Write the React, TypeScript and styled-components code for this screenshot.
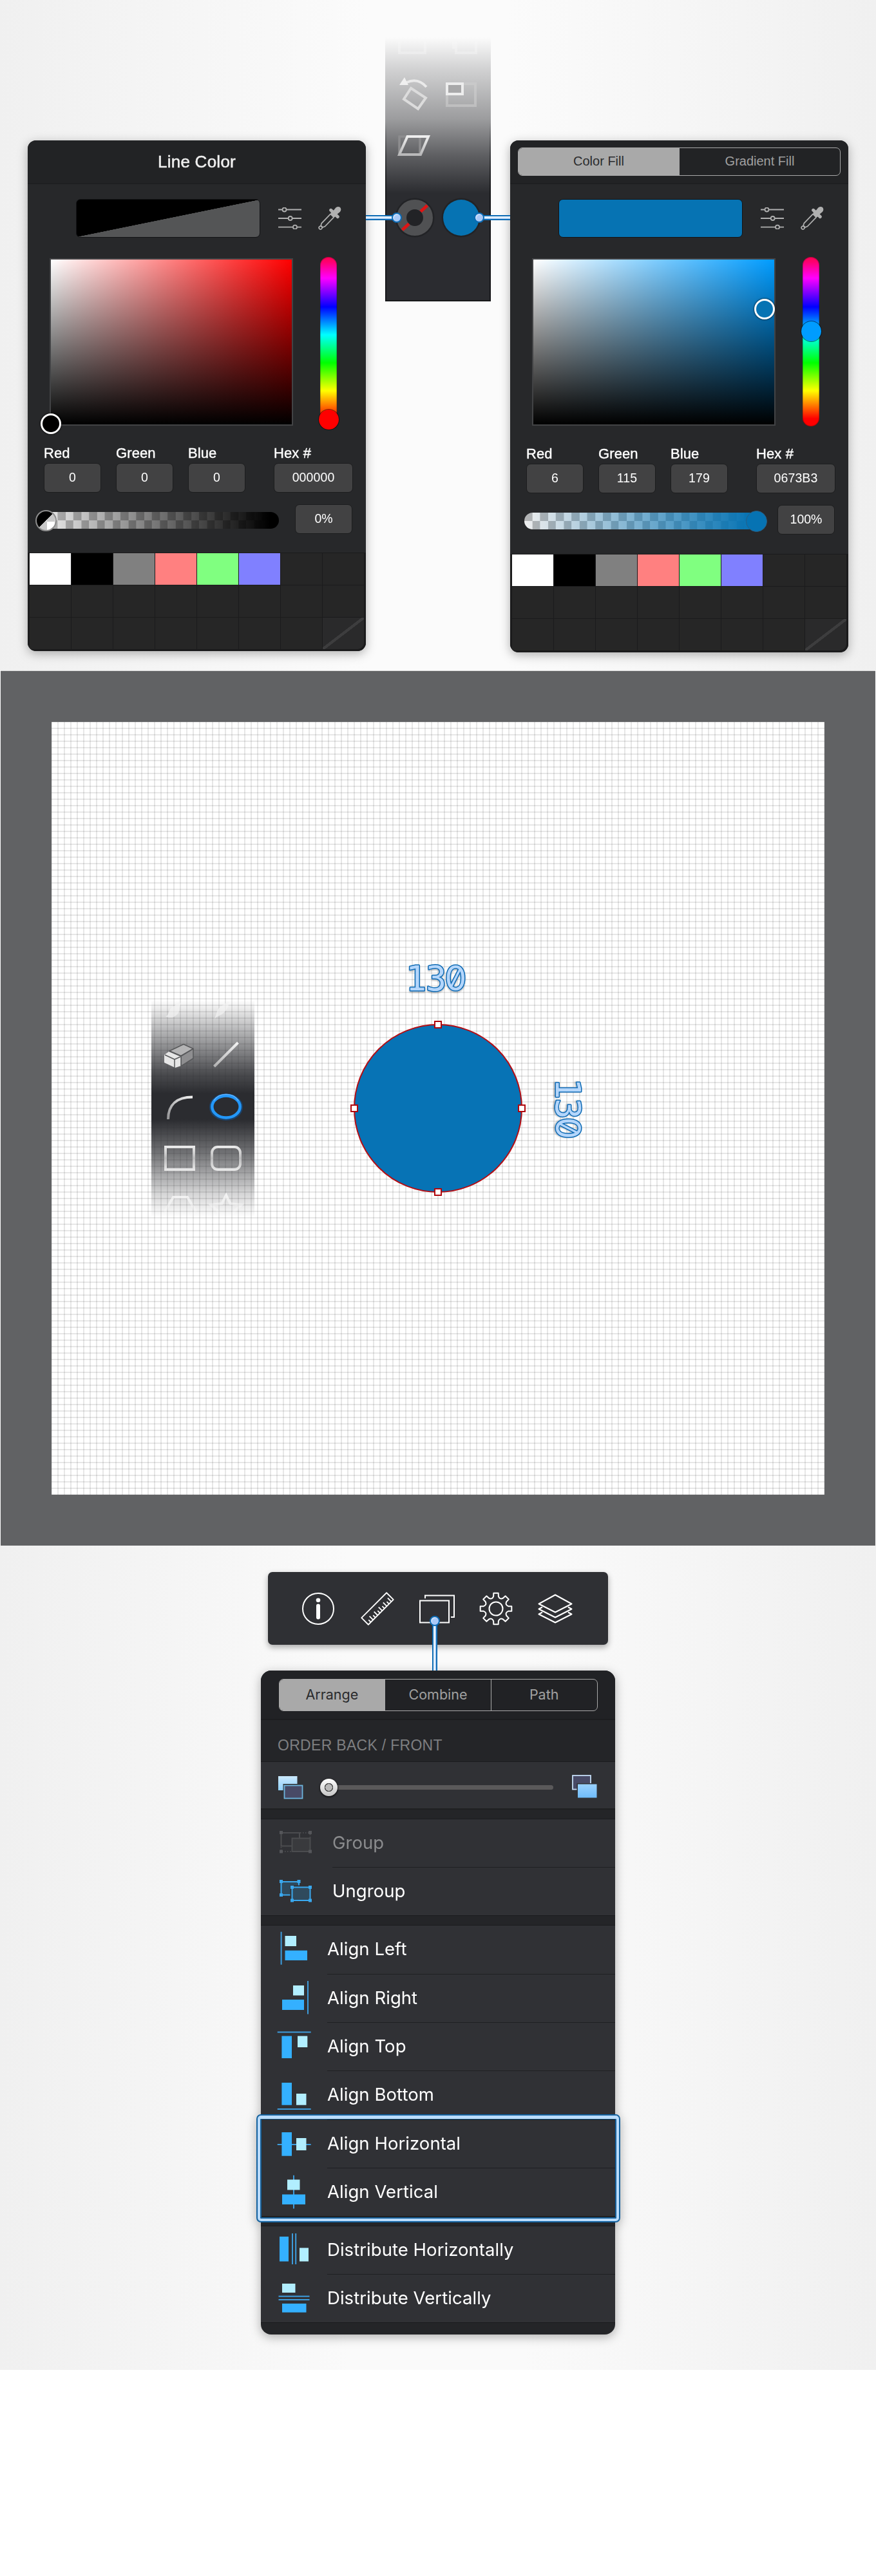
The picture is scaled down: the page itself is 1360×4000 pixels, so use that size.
import React from "react";
import styled, { createGlobalStyle, css } from "styled-components";

const helvetica = `"Liberation Sans", Arial, sans-serif`;
const sanFrancisco = `Inter, "Liberation Sans", sans-serif`;

const GlobalStyle = createGlobalStyle`
  *, *::before, *::after { box-sizing: border-box; }
  body { margin: 0; background: #fff; font-family: ${helvetica}; }
  svg { display: block; flex: none; }
`;

const Page = styled.main`
  width: 1360px;
  height: 4000px;
  overflow: hidden;
  background: #fff;
`;

const Backdrop = styled.section`
  position: relative;
  background: linear-gradient(90deg, #f0f0f0, #fbfbfb 42%, #fbfbfb 58%, #f0f0f0);
`;

const ColorSection = styled(Backdrop)`
  height: 1041px;
  display: flex;
  align-items: flex-start;
  padding: 0 43px;
`;

/* ---------- Color panels ---------- */

const Panel = styled.div`
  margin-top: 218px;
  width: 525px;
  flex: none;
  border-radius: 13px;
  overflow: hidden;
  background: #27282a;
`;

const PanelShadow = styled.div<{ $left?: number }>`
  margin-left: ${(p) => p.$left ?? 0}px;
  flex: none;
  filter: drop-shadow(0 4px 8px rgba(0, 0, 0, 0.3));
`;

const PanelHeader = styled.header`
  height: 68px;
  border-bottom: 2px solid #1e1f21;
  background: #222325;
  display: flex;
  align-items: flex-start;
  justify-content: center;
`;

const PanelTitle = styled.h2`
  margin: 18px 0 0;
  font: 400 26px/30px ${helvetica};
  color: #f0f0f0;
  letter-spacing: 0.25px;
  -webkit-text-stroke: 0.5px #f0f0f0;
`;

const Segments = styled.div<{ $w: number; $h: number; $top: number }>`
  margin-top: ${(p) => p.$top}px;
  width: ${(p) => p.$w}px;
  height: ${(p) => p.$h}px;
  display: flex;
  border: 1.5px solid #a9a9a9;
  border-radius: 7px;
  overflow: hidden;
`;

const Segment = styled.button<{ $active?: boolean; $font: string; $size: number }>`
  flex: 1;
  border: 0;
  padding: 0 0 2px;
  font-family: ${(p) => p.$font};
  font-size: ${(p) => p.$size}px;
  color: ${(p) => (p.$active ? "#2a2b2d" : "#a0a0a0")};
  background: ${(p) => (p.$active ? "#a9a9a9" : "transparent")};
  & + & { border-left: 1.5px solid #a9a9a9; }
`;

const SwatchRow = styled.div`
  display: flex;
  align-items: center;
  height: 60px;
  margin: 23px 0 0 75px;
`;

const CurrentSwatch = styled.div<{ $color?: string }>`
  width: 286px;
  height: 60px;
  border: 1.5px solid #131416;
  border-radius: 7px;
  margin-right: 27px;
  background: ${(p) => p.$color ?? "linear-gradient(to bottom right, #000 49.8%, #545556 50.2%)"};
`;

const PickerRow = styled.div`
  display: flex;
  margin: 30px 0 0 34px;
  height: 263px;
`;

const Field = styled.div<{ $hue: string }>`
  position: relative;
  margin: 2px 42px 0 0;
  width: 378px;
  height: 260px;
  border: 2.5px solid #424345;
  background: linear-gradient(to top, #000, transparent), linear-gradient(to right, #fff, ${(p) => p.$hue});
`;

const FieldHandle = styled.i<{ $x: number; $y: number; $color: string }>`
  position: absolute;
  left: ${(p) => p.$x - 16}px;
  top: ${(p) => p.$y - 16}px;
  width: 32px;
  height: 32px;
  border-radius: 50%;
  border: 3px solid #fff;
  background: ${(p) => p.$color};
  box-shadow: 0 0 2px 1px rgba(0, 0, 0, 0.45);
`;

const HueBar = styled.div`
  position: relative;
  width: 26px;
  height: 263px;
  border-radius: 13px;
  background: linear-gradient(#ff0050, #ff0070 3%, #f0f 12.5%, #00f 29.5%, #0ff 46%, #0f0 62.5%, #ff0 79%, #f00 95.5%);
  box-shadow: inset 0 0 1px 1px rgba(0, 0, 0, 0.25);
`;

const HueKnob = styled.i<{ $y: number; $color: string }>`
  position: absolute;
  left: -3.5px;
  top: ${(p) => p.$y - 16.5}px;
  width: 33px;
  height: 33px;
  border-radius: 50%;
  border: 1.5px solid rgba(0, 0, 0, 0.5);
  background: ${(p) => p.$color};
  background-clip: padding-box;
`;

const Inputs = styled.div<{ $gap: number }>`
  display: flex;
  gap: 23px;
  margin: ${(p) => p.$gap}px 0 0 25px;
`;

const InputGroup = styled.label<{ $push?: boolean }>`
  display: flex;
  flex-direction: column;
  margin-left: ${(p) => (p.$push ? 21 : 0)}px;
  font: 400 22px/24px ${helvetica};
  letter-spacing: 0.1px;
  color: #fff;
  -webkit-text-stroke: 0.4px #fff;
`;

const ValueBox = styled.div<{ $w?: number }>`
  width: ${(p) => p.$w ?? 89}px;
  height: 46px;
  margin-top: 3px;
  border: 1px solid #1c1d1e;
  border-radius: 7px;
  background: #424243;
  color: #fff;
  font: 400 19.5px/43px ${helvetica};
  text-align: center;
  -webkit-text-stroke: 0;
`;

const OpacityRow = styled.div<{ $bottom: number }>`
  display: flex;
  align-items: center;
  margin: 15px 0 ${(p) => p.$bottom}px 22px;
`;

const OpacityTrack = styled.div<{ $color: string }>`
  position: relative;
  width: 368px;
  height: 26px;
  margin: 7px 25px 0 0;
  border-radius: 13px;
  background:
    linear-gradient(to right, transparent, ${(p) => p.$color} 96%),
    conic-gradient(#eee 25%, #b4b4b4 0 50%, #eee 0 75%, #b4b4b4 0) 0 0 / 24.4px 26px;
`;

const OpacityKnob = styled.i<{ $x: number; $color: string; $clear?: boolean }>`
  position: absolute;
  left: ${(p) => p.$x - 16.5}px;
  top: -3.5px;
  width: 33px;
  height: 33px;
  border-radius: 50%;
  ${(p) =>
    p.$clear
      ? css`
          border: 2px solid #8d8d8d;
          background: linear-gradient(135deg, #000 50%, transparent 50%),
            conic-gradient(#c8c8c8 25%, #fff 0 50%, #c8c8c8 0 75%, #ddd 0) 4px 3px / 24px 26px;
        `
      : css`
          border: 1px solid #2a5f86;
          background: ${p.$color};
        `}
`;

const Palette = styled.div`
  display: grid;
  grid-template-columns: repeat(8, 64px);
  grid-auto-rows: 49px;
  gap: 1px;
  padding: 1px 3px 3px;
  background: #1b1b1c;
`;

const PaletteCell = styled.i<{ $color?: string }>`
  background: ${(p) => p.$color ?? "#262626"};
  &:last-child {
    border-bottom-right-radius: 10px;
    background: linear-gradient(to bottom right, #2a2a2b 47%, #3d3d3e 47.5% 52.5%, #2a2a2b 53%);
  }
`;

const paletteColors = ["#ffffff", "#000000", "#808080", "#ff8080", "#80ff80", "#8080ff"];

const SlidersIcon = () => (
  <svg width="38" height="34" viewBox="0 0 38 34" fill="#27282a" stroke="#b0b0b0" strokeWidth="1.8">
    <path d="M1 3.5h36M1 17h36M1 30.7h36" />
    <circle cx="10.5" cy="3.5" r="3" />
    <circle cx="19.7" cy="17" r="3" />
    <circle cx="27" cy="30.7" r="3" />
  </svg>
);

const Dropper = styled.svg`
  margin-left: 24px;
`;

const EyedropperIcon = () => (
  <Dropper width="38" height="38" viewBox="0 0 38 38" fill="none" stroke="#b0b0b0" strokeWidth="1.7">
    <g transform="translate(18.7 19) rotate(44)">
      <path
        d="M-4.6 -18.5a4.6 5 0 0 1 9.2 0l-.6 5.5h3.4a2.5 2.5 0 0 1 0 5H4.6L3.6 -5h-7.2l-1 -3h-2.8a2.5 2.5 0 0 1 0 -5h3.4z"
        fill="#b0b0b0"
        stroke="none"
      />
      <path d="M-3.6 -6V14l1.6 3.5h4L3.6 14V-6" />
      <circle cx="0" cy="20.3" r="2.4" />
    </g>
  </Dropper>
);

type ColorPanelProps = {
  left?: number;
  header: React.ReactNode;
  swatch?: string;
  hue: string;
  color: string;
  handle: [number, number];
  hueY: number;
  rgb: [string, string, string];
  hex: string;
  opacity: string;
  clear?: boolean;
  slack: number;
};

const ColorPanel = (p: ColorPanelProps) => (
  <PanelShadow $left={p.left}>
    <Panel>
      <PanelHeader>{p.header}</PanelHeader>
      <SwatchRow>
        <CurrentSwatch $color={p.swatch} />
        <SlidersIcon />
        <EyedropperIcon />
      </SwatchRow>
      <PickerRow>
        <Field $hue={p.hue}>
          <FieldHandle $x={p.handle[0]} $y={p.handle[1]} $color={p.color} />
        </Field>
        <HueBar>
          <HueKnob $y={p.hueY} $color={p.hue} />
        </HueBar>
      </PickerRow>
      <Inputs $gap={30 + p.slack}>
        {["Red", "Green", "Blue"].map((name, i) => (
          <InputGroup key={name}>
            {name}
            <ValueBox>{p.rgb[i]}</ValueBox>
          </InputGroup>
        ))}
        <InputGroup $push>
          Hex #<ValueBox $w={123}>{p.hex}</ValueBox>
        </InputGroup>
      </Inputs>
      <OpacityRow $bottom={29 + p.slack}>
        <OpacityTrack $color={p.color}>
          <OpacityKnob $x={p.clear ? 6.7 : 360.5} $color={p.color} $clear={p.clear} />
        </OpacityTrack>
        <ValueBox>{p.opacity}</ValueBox>
      </OpacityRow>
      <Palette>
        {Array.from({ length: 24 }, (_, i) => (
          <PaletteCell key={i} $color={paletteColors[i]} />
        ))}
      </Palette>
    </Panel>
  </PanelShadow>
);

/* ---------- Center tool strip ---------- */

const ToolStrip = styled.div`
  margin: 58px 0 0 30px;
  width: 164px;
  height: 410px;
  flex: none;
  border-radius: 0 0 3px 3px;
  background: linear-gradient(
    rgba(43, 44, 48, 0),
    rgba(43, 44, 48, 0.2) 12%,
    rgba(43, 44, 48, 0.46) 31%,
    rgba(43, 44, 48, 0.75) 44.5%,
    #2b2c30 59%
  );
`;

const Connector = styled.div<{ $x: number; $y: number; $len: number; $dir: "left" | "right" | "down" }>`
  position: absolute;
  z-index: 2;
  left: ${(p) => p.$x}px;
  top: ${(p) => p.$y}px;
  width: ${(p) => (p.$dir === "down" ? 8 : p.$len)}px;
  height: ${(p) => (p.$dir === "down" ? p.$len : 8)}px;
  background: ${(p) =>
    `linear-gradient(${p.$dir === "down" ? "to right" : "to bottom"}, #0b6ab4 2px, #f2f9ff 2px 4px, #bcd8f8 4px 6px, #0b6ab4 6px)`};
  &::after {
    content: "";
    position: absolute;
    width: 16px;
    height: 16px;
    border-radius: 50%;
    border: 2px solid #0b6ab4;
    background: radial-gradient(circle at 60% 60%, #a9c9f7 45%, #e8f3ff 80%);
    ${(p) =>
      p.$dir === "left" ? "right: -8px; top: -4px;" : p.$dir === "right" ? "left: -8px; top: -4px;" : "left: -4px; top: -8px;"}
  }
`;

const ToolStripArt = () => (
  <svg width="164" height="410" viewBox="598 58 164 410" fill="none" stroke="#e4e4e5" strokeWidth="4">
    <path d="M599 190V467H761V190" stroke="url(#edge)" strokeWidth="2" />
    <defs>
      <linearGradient id="edge" x1="0" y1="190" x2="0" y2="310" gradientUnits="userSpaceOnUse">
        <stop stopColor="#17181a" stopOpacity="0" />
        <stop offset="1" stopColor="#17181a" />
      </linearGradient>
      <linearGradient id="metal" x1="0" y1="0" x2="0" y2="1">
        <stop stopColor="#eeeeee" />
        <stop offset="1" stopColor="#b8b8b9" />
      </linearGradient>
    </defs>
    <g stroke="#f8f8f8" opacity=".4">
      <path d="M620 62v20h40V62" />
      <path d="M708 62v20h31V62M704 62v14" />
    </g>
    <path d="M631 128q18-8 31 7" stroke="#eaeaea" />
    <path d="M620 132l8-12 6 12z" fill="#f0f0f0" stroke="none" />
    <path d="M638 137l23 15-12 17-22-15z" stroke="#dcdcdc" />
    <path d="M694 130h44v34h-44z" stroke="#cfcfcf" opacity=".55" />
    <path d="M694 130h24v16h-24z" stroke="#ededed" fill="#a8a8a9" />
    <path d="M620 212h32v28h-32z" stroke="#8d8d8f" strokeWidth="3.5" />
    <path d="M632.500 212h32.500l-12 28h-33z" stroke="url(#metal)" />
    <circle cx="644" cy="338" r="30.500" fill="#222326" stroke="none" />
    <circle cx="644" cy="338" r="20.500" stroke="#505153" strokeWidth="15" />
    <path d="M653 328.500l10.500-9.500M635 347.500l-10.500 9.500" stroke="#de1414" strokeWidth="5" />
    <circle cx="716" cy="338" r="30.500" fill="#222326" stroke="none" />
    <circle cx="716" cy="338" r="28" fill="#0673b3" stroke="none" />
  </svg>
);

/* ---------- Canvas ---------- */

const CanvasFrame = styled.section`
  height: 1359px;
  padding: 79px 79px 80px;
  margin: 0 1px;
  border-top: 1px solid #dcdcdc;
  background: #616264;
`;

const Paper = styled.div`
  position: relative;
  width: 1200px;
  height: 1200px;
  background:
    linear-gradient(rgba(0, 0, 0, 0.095) 2px, transparent 2px) 9px 9px / 10px 10px,
    linear-gradient(90deg, rgba(0, 0, 0, 0.095) 2px, transparent 2px) 9px 9px / 10px 10px,
    #fff;
`;

const ShapeStrip = styled.div`
  position: absolute;
  left: 155px;
  top: 432px;
  width: 160px;
  height: 337px;
  background: linear-gradient(
    rgba(43, 44, 48, 0),
    rgba(43, 44, 48, 0.22) 9%,
    rgba(43, 44, 48, 0.85) 34%,
    #2b2c30 43%,
    #2b2c30 55%,
    rgba(43, 44, 48, 0.65) 71%,
    rgba(43, 44, 48, 0.2) 89%,
    rgba(43, 44, 48, 0)
  );
`;

const ShapeStripArt = () => (
  <svg width="160" height="337" viewBox="235 1553 160 337" fill="none" stroke="#dcdcdc" strokeWidth="4">
    <defs>
      <linearGradient id="steel" x1="0" y1="1620" x2="0" y2="1660" gradientUnits="userSpaceOnUse">
        <stop stopColor="#f2f2f2" />
        <stop offset="1" stopColor="#a9a9aa" />
      </linearGradient>
      <linearGradient id="arcFill" x1="299" y1="1703" x2="259" y2="1738" gradientUnits="userSpaceOnUse">
        <stop stopColor="#f2f2f2" />
        <stop offset="1" stopColor="#929294" />
      </linearGradient>
      <linearGradient id="frame" x1="0" y1="1779" x2="0" y2="1818" gradientUnits="userSpaceOnUse">
        <stop stopColor="#ececec" />
        <stop offset=".5" stopColor="#b9b9ba" />
        <stop offset="1" stopColor="#ececec" />
      </linearGradient>
      <linearGradient id="fade" x1="0" y1="1850" x2="0" y2="1888" gradientUnits="userSpaceOnUse">
        <stop stopColor="#f8f8f8" />
        <stop offset="1" stopColor="#fff" stopOpacity="0" />
      </linearGradient>
    </defs>
    <g fill="#f5f5f5" stroke="none" opacity=".65">
      <path d="M257 1578c6 0 4-14 14-16l6-6 4 2-3 8c2 10-12 18-21 12z" />
      <path d="M333 1582l5-14c5-7 13-9 15-13l3 1c-1 5-3 12-9 17-4 4-9 4-14 9z" />
    </g>
    <g strokeWidth="1.500" strokeLinejoin="round" stroke="#58595b">
      <path d="M263 1632l22-10.500 15 7-19 11z" fill="#b4b4b5" />
      <path d="M281 1640l19-11.500v15l-19 12z" fill="#8e8e90" />
      <path d="M255 1638l7-5 19 8v14l-9 3-17-8z" fill="#e6e6e6" stroke="none" />
      <path d="M256 1638l15 7 9-4M271 1645v13" />
      <path d="M263 1632l18 8v15" />
    </g>
    <path d="M332.500 1656l37-37" stroke="url(#steel)" />
    <path d="M261 1738c0-23 14-34.500 38-34.500" stroke="url(#arcFill)" />
    <ellipse cx="351" cy="1719" rx="23" ry="18" stroke="#0b5aa8" strokeWidth="6" opacity=".5" />
    <ellipse cx="351" cy="1718.500" rx="21.700" ry="17" stroke="#2397f8" strokeWidth="4.500" />
    <path d="M332 1709c8-13 30-13 38 0" stroke="#62b4ff" strokeWidth="1.500" />
    <path d="M257 1781h44v35h-44z" stroke="url(#frame)" />
    <rect x="329" y="1781" width="44" height="35" rx="9" stroke="url(#frame)" />
    <path d="M256.500 1880l12.500-21h22l12.500 21-6 10h-35z" stroke="url(#fade)" />
    <path d="M351 1856l6.500 13 17 2-12 11 3 14h-29l3-14-12-11 17-2z" stroke="url(#fade)" />
  </svg>
);

const Drawing = styled.svg`
  position: absolute;
  left: 0;
  top: 0;
`;

const SlashedZero = styled.tspan`
  font-family: Inter, sans-serif;
  font-feature-settings: "zero" 1;
`;

const Measure = ({ transform }: { transform: string }) => (
  <g transform={transform} fontFamily='"DejaVu Sans Mono", monospace' fontSize="53.500" strokeLinejoin="round">
    <g filter="url(#lift)">
      <text y="20" fill="#b4d6fb" stroke="#0f6ab4" strokeWidth="3" paintOrder="stroke">
        <tspan x="-49.500">1</tspan>
        <tspan x="-18.500">3</tspan>
        <SlashedZero x="11">0</SlashedZero>
      </text>
    </g>
  </g>
);

const handles = [
  [600, 470],
  [470, 600],
  [730, 600],
  [600, 730],
];

const CanvasDrawing = () => (
  <Drawing width="1200" height="1200" viewBox="0 0 1200 1200">
    <defs>
      <filter id="lift" x="-20%" y="-20%" width="140%" height="150%">
        <feDropShadow dx="0" dy="2" stdDeviation="1" floodOpacity=".25" />
      </filter>
    </defs>
    <circle cx="600" cy="600" r="130" fill="#0773b5" stroke="#b30d14" strokeWidth="2" />
    {handles.map(([x, y]) => (
      <rect key={`${x}-${y}`} x={x - 5} y={y - 5} width="10" height="10" fill="#fff" stroke="#b0070d" strokeWidth="2" />
    ))}
    <Measure transform="translate(599.500 397)" />
    <Measure transform="translate(803 603) rotate(90)" />
  </Drawing>
);

/* ---------- Arrange section ---------- */

const ArrangeSection = styled(Backdrop)`
  height: 1280px;
  padding-top: 41px;
  display: flex;
  flex-direction: column;
  align-items: center;
  background: linear-gradient(90deg, #f0f0f0, #fafafa 40%, #fafafa 60%, #f0f0f0);
`;

const TopBar = styled.nav`
  width: 528px;
  height: 113px;
  border-radius: 7px;
  background: #2f3034;
  box-shadow: 0 4px 10px rgba(0, 0, 0, 0.32);
`;

const gearPath = (() => {
  const pt = (r: number, a: number) => `${(354 + r * Math.sin(a)).toFixed(2)} ${(57 - r * Math.cos(a)).toFixed(2)}`;
  let d = "";
  for (let i = 0; i < 8; i++) {
    const a = (i * Math.PI) / 4;
    d += `${i ? "L" : "M"}${pt(19.5, a - 0.2)}L${pt(24.6, a - 0.15)}L${pt(24.6, a + 0.15)}L${pt(19.5, a + 0.2)}`;
    d += `Q${pt(15.2, a + Math.PI / 8)} ${pt(19.5, a + Math.PI / 4 - 0.2)}`;
  }
  return `${d}Z`;
})();

const TopBarIcons = () => (
  <svg width="528" height="113" viewBox="0 0 528 113" fill="none" stroke="#fff" strokeWidth="2" strokeLinejoin="round">
    <circle cx="78" cy="57" r="24" />
    <circle cx="78" cy="43.800" r="3.300" fill="#fff" stroke="none" />
    <path d="M78 52.500v18" strokeWidth="6" strokeLinecap="round" />
    <g transform="translate(170 57) rotate(-45)">
      <path d="M-27.500 -7.500h55v15h-55zM-22 7.500v-5M-17 7.500v-8M-12 7.500v-5M-7 7.500v-8M-2 7.500v-5M3 7.500v-8M8 7.500v-5M13 7.500v-8M18 7.500v-5M23 7.500v-8" strokeWidth="1.800" />
    </g>
    <path d="M236 44.500h45v34h-45zM244 41v-4.500h45V70h-5" strokeLinejoin="miter" />
    <path d={gearPath} />
    <circle cx="354" cy="57" r="10.500" />
    <path d="M446 35.500l25.500 14L446 62.500l-25.500-13z" />
    <path d="M426 54.500l-5.500 3L446 70.500l25.500-13-5.500-3M426 62.500l-5.500 3L446 78.500l25.500-13-5.500-3" />
  </svg>
);

const ArrangePanel = styled.div`
  position: relative;
  width: 550px;
  margin-top: 40px;
  filter: drop-shadow(0 4px 8px rgba(0, 0, 0, 0.3));
`;

const ArrangeBody = styled.div`
  height: 1031px;
  border-radius: 16px;
  overflow: hidden;
  background: #242528;
`;

const ArrangeHeader = styled.header`
  height: 77px;
  display: flex;
  align-items: flex-start;
  justify-content: center;
  background: #212225;
  border-bottom: 2px solid #1c1d1f;
`;

const SectionLabel = styled.h3`
  margin: 0;
  height: 65px;
  padding: 25px 0 0 26px;
  font: 400 23px/28px ${helvetica};
  letter-spacing: 0.3px;
  color: #7e7f81;
  border-bottom: 1px solid #1b1c1e;
`;

const OrderRow = styled.div`
  height: 74px;
  display: flex;
  align-items: center;
  padding: 0 27px;
  background: #303135;
  border-bottom: 2px solid #1f2022;
`;

const OrderTrack = styled.div`
  position: relative;
  width: 349px;
  height: 7px;
  margin: 7px 29px 0 39px;
  border-radius: 4px;
  background: #5a595a;
  &::before {
    content: "";
    position: absolute;
    left: -13px;
    top: -10.5px;
    width: 27px;
    height: 27px;
    border-radius: 50%;
    background: radial-gradient(circle, #b9b9b9 5px, #4c4c4c 5.5px 6.5px, transparent 7px), linear-gradient(#fff, #c4c4c4);
    box-shadow: 0 1px 2px 1px rgba(0, 0, 0, 0.6);
  }
`;

const MenuGroup = styled.div`
  margin-top: 14px;
  border-top: 1px solid #1b1c1e;
  border-bottom: 1px solid #1b1c1e;
  background: #303135;
`;

const MenuRow = styled.div<{ $wide?: boolean }>`
  display: grid;
  grid-template-columns: ${(p) => (p.$wide ? 88 : 80)}px 1fr;
  height: 75.4px;
  padding-left: 23px;
  align-items: center;
  & > :last-child { border-bottom: 1px solid #1f2022; }
  &:last-child { height: 73.8px; }
  &:last-child > :last-child { border-bottom: 0; }
`;

const MenuText = styled.span<{ $dim?: boolean }>`
  height: 100%;
  font: 400 27.5px/73px ${sanFrancisco};
  letter-spacing: 0.05px;
  color: ${(p) => (p.$dim ? "#8a8b8d" : "#fff")};
`;

const Highlight = styled.div`
  position: absolute;
  left: -7px;
  top: 689px;
  width: 565px;
  height: 168px;
  border-radius: 7px;
  border: 2px solid #14629f;
  box-shadow: inset 0 0 0 4px #b9dbfb, inset 0 1px 0 4px #d9f0ff, inset 0 0 0 6px #155f99;
`;

const blue = "#34b0ff";
const pale = "#b1eeff";
const line = "#3d9cdc";

type Box = [x: number, y: number, w: number, h: number];

const AlignIcon = ({ lines, big, small }: { lines: Box[]; big: Box; small: Box }) => {
  const rect = ([x, y, width, height]: Box, fill: string) => (
    <rect key={`${x}-${y}`} x={x} y={y} width={width} height={height} fill={fill} />
  );
  return (
    <svg width="60" height="75" viewBox="0 0 60 75">
      {lines.map((l) => rect(l, line))}
      {rect(big, blue)}
      {rect(small, pale)}
    </svg>
  );
};

const GroupIcon = () => (
  <svg width="60" height="75" viewBox="0 0 60 75" fill="none" stroke="#4b4c4f" strokeWidth="2">
    <path d="M8.500 21h28.500v20.500H8.500z" />
    <path d="M25.500 29.500h28v20.500h-28z" fill="#393a3d" />
    <path d="M38 21h14M10 50h14M8.500 43v5M53.500 23v6" strokeDasharray="1.500 2.500" />
    <g fill="#55565a" stroke="none">
      <path d="M6 18h5v5H6zM51 18h5v5h-5zM6 47.500h5v5H6zM51 47.500h5v5h-5z" />
    </g>
  </svg>
);

const UngroupIcon = () => (
  <svg width="60" height="75" viewBox="0 0 60 75" fill="#2f4a5d" stroke="#3aa8ee" strokeWidth="2">
    <path d="M8.500 22h27.500v20.500H8.500z" />
    <path d="M25.500 30.500h28v20.500h-28z" stroke="#303135" strokeWidth="6" />
    <path d="M25.500 30.500h28v20.500h-28z" />
    <path
      d="M6 19h5v5H6zM33.500 19h5v5h-5zM6 40h5v5H6zM23 28h5v5h-5zM51 28h5v5h-5zM23 48.500h5v5h-5zM51 48.500h5v5h-5z"
      fill="#3aa8ee"
      stroke="none"
    />
  </svg>
);

const OrderIcon = ({ front }: { front?: boolean }) => (
  <svg width="39" height="36" viewBox="0 0 39 36" strokeWidth="1.800">
    <defs>
      <linearGradient id={front ? "toFront" : "toBack"} x1="0" y1="0" x2="0" y2="1">
        <stop stopColor={front ? "#9ad2ff" : "#cbe9ff"} />
        <stop offset="1" stopColor={front ? "#6fbcfb" : "#8fd0fb"} />
      </linearGradient>
    </defs>
    {front ? (
      <>
        <rect x="1" y="1" width="28" height="21.500" fill="#484a66" stroke="#c5ddf7" />
        <rect x="7.500" y="13" width="31" height="23" fill="#303135" />
        <rect x="9" y="14.500" width="29.500" height="21" fill="url(#toFront)" />
      </>
    ) : (
      <>
        <rect x="0" y="0" width="29.500" height="22" fill="url(#toBack)" />
        <rect x="7.500" y="12" width="31" height="24" fill="#303135" />
        <rect x="9.500" y="14.500" width="28" height="20" fill="#484a66" stroke="#6db4dc" />
      </>
    )}
  </svg>
);

const OrderIconSlot = styled.span<{ $dy: number }>`
  padding-top: ${(p) => p.$dy}px;
`;

type AlignItem = { label: string; lines: Box[]; big: Box; small: Box };

const alignItems: AlignItem[] = [
  { label: "Align Left", lines: [[7.6, 9.7, 2, 51]], small: [14.5, 16, 17.5, 16], big: [14.5, 38.7, 34.5, 15.3] },
  { label: "Align Right", lines: [[49, 10, 2, 51.5]], small: [27, 17, 17, 15.5], big: [10, 39, 34, 16] },
  { label: "Align Top", lines: [[2.7, 13.5, 52, 2]], big: [9.4, 20.5, 15.6, 34.5], small: [34, 20.5, 15.3, 17.5] },
  { label: "Align Bottom", lines: [[2.7, 57, 52, 2]], big: [9.4, 17, 15.6, 34.7], small: [32, 34, 15.5, 17.7] },
  { label: "Align Horizontal", lines: [[2.7, 37, 52, 2]], big: [9.4, 19, 15.6, 36.7], small: [32, 28, 15.5, 19] },
  { label: "Align Vertical", lines: [[27, 10.8, 2, 51.7]], small: [18, 17.5, 19.5, 16], big: [10, 40.5, 36, 15.5] },
];

const distributeItems: AlignItem[] = [
  { label: "Distribute Horizontally", lines: [[25, 11, 2, 48], [30.2, 11, 2, 48]], big: [6, 16, 14, 38.5], small: [37, 33.5, 14, 21] },
  { label: "Distribute Vertically", lines: [[4.5, 32.7, 48, 2], [4.5, 38, 48, 2]], small: [10, 14, 20.5, 14], big: [10, 45, 37.5, 13.7] },
];

const AlignRows = ({ items }: { items: AlignItem[] }) => (
  <MenuGroup>
    {items.map(({ label, ...shape }) => (
      <MenuRow key={label}>
        <AlignIcon {...shape} />
        <MenuText>{label}</MenuText>
      </MenuRow>
    ))}
  </MenuGroup>
);

export default function App() {
  return (
    <>
      <GlobalStyle />
      <Page>
        <ColorSection>
          <ColorPanel
            header={<PanelTitle>Line Color</PanelTitle>}
            hue="#ff0000"
            color="#000000"
            handle={[0, 254.5]}
            hueY={252.5}
            rgb={["0", "0", "0"]}
            hex="000000"
            opacity="0%"
            clear
            slack={0}
          />
          <ToolStrip>
            <ToolStripArt />
          </ToolStrip>
          <ColorPanel
            left={30}
            header={
              <Segments $w={501} $h={44} $top={11}>
                <Segment $active $font={helvetica} $size={20}>Color Fill</Segment>
                <Segment $font={helvetica} $size={20}>Gradient Fill</Segment>
              </Segments>
            }
            swatch="#0673b3"
            hue="#009cff"
            color="#0673b3"
            handle={[359, 76.5]}
            hueY={115}
            rgb={["6", "115", "179"]}
            hex="0673B3"
            opacity="100%"
            slack={1}
          />
          <Connector $dir="left" $x={568} $y={334} $len={48} />
          <Connector $dir="right" $x={744} $y={334} $len={48} />
        </ColorSection>

        <CanvasFrame>
          <Paper>
            <ShapeStrip>
              <ShapeStripArt />
            </ShapeStrip>
            <CanvasDrawing />
          </Paper>
        </CanvasFrame>

        <ArrangeSection>
          <TopBar>
            <TopBarIcons />
          </TopBar>
          <Connector $dir="down" $x={671} $y={117} $len={77} />
          <ArrangePanel>
            <ArrangeBody>
              <ArrangeHeader>
                <Segments $w={495} $h={50} $top={13}>
                  <Segment $active $font={sanFrancisco} $size={21.5}>Arrange</Segment>
                  <Segment $font={sanFrancisco} $size={21.5}>Combine</Segment>
                  <Segment $font={sanFrancisco} $size={21.5}>Path</Segment>
                </Segments>
              </ArrangeHeader>
              <SectionLabel>ORDER BACK / FRONT</SectionLabel>
              <OrderRow>
                <OrderIconSlot $dy={7}>
                  <OrderIcon />
                </OrderIconSlot>
                <OrderTrack />
                <OrderIconSlot $dy={4}>
                  <OrderIcon front />
                </OrderIconSlot>
              </OrderRow>
              <MenuGroup>
                <MenuRow $wide>
                  <GroupIcon />
                  <MenuText $dim>Group</MenuText>
                </MenuRow>
                <MenuRow $wide>
                  <UngroupIcon />
                  <MenuText>Ungroup</MenuText>
                </MenuRow>
              </MenuGroup>
              <AlignRows items={alignItems} />
              <AlignRows items={distributeItems} />
            </ArrangeBody>
            <Highlight />
          </ArrangePanel>
        </ArrangeSection>
      </Page>
    </>
  );
}
